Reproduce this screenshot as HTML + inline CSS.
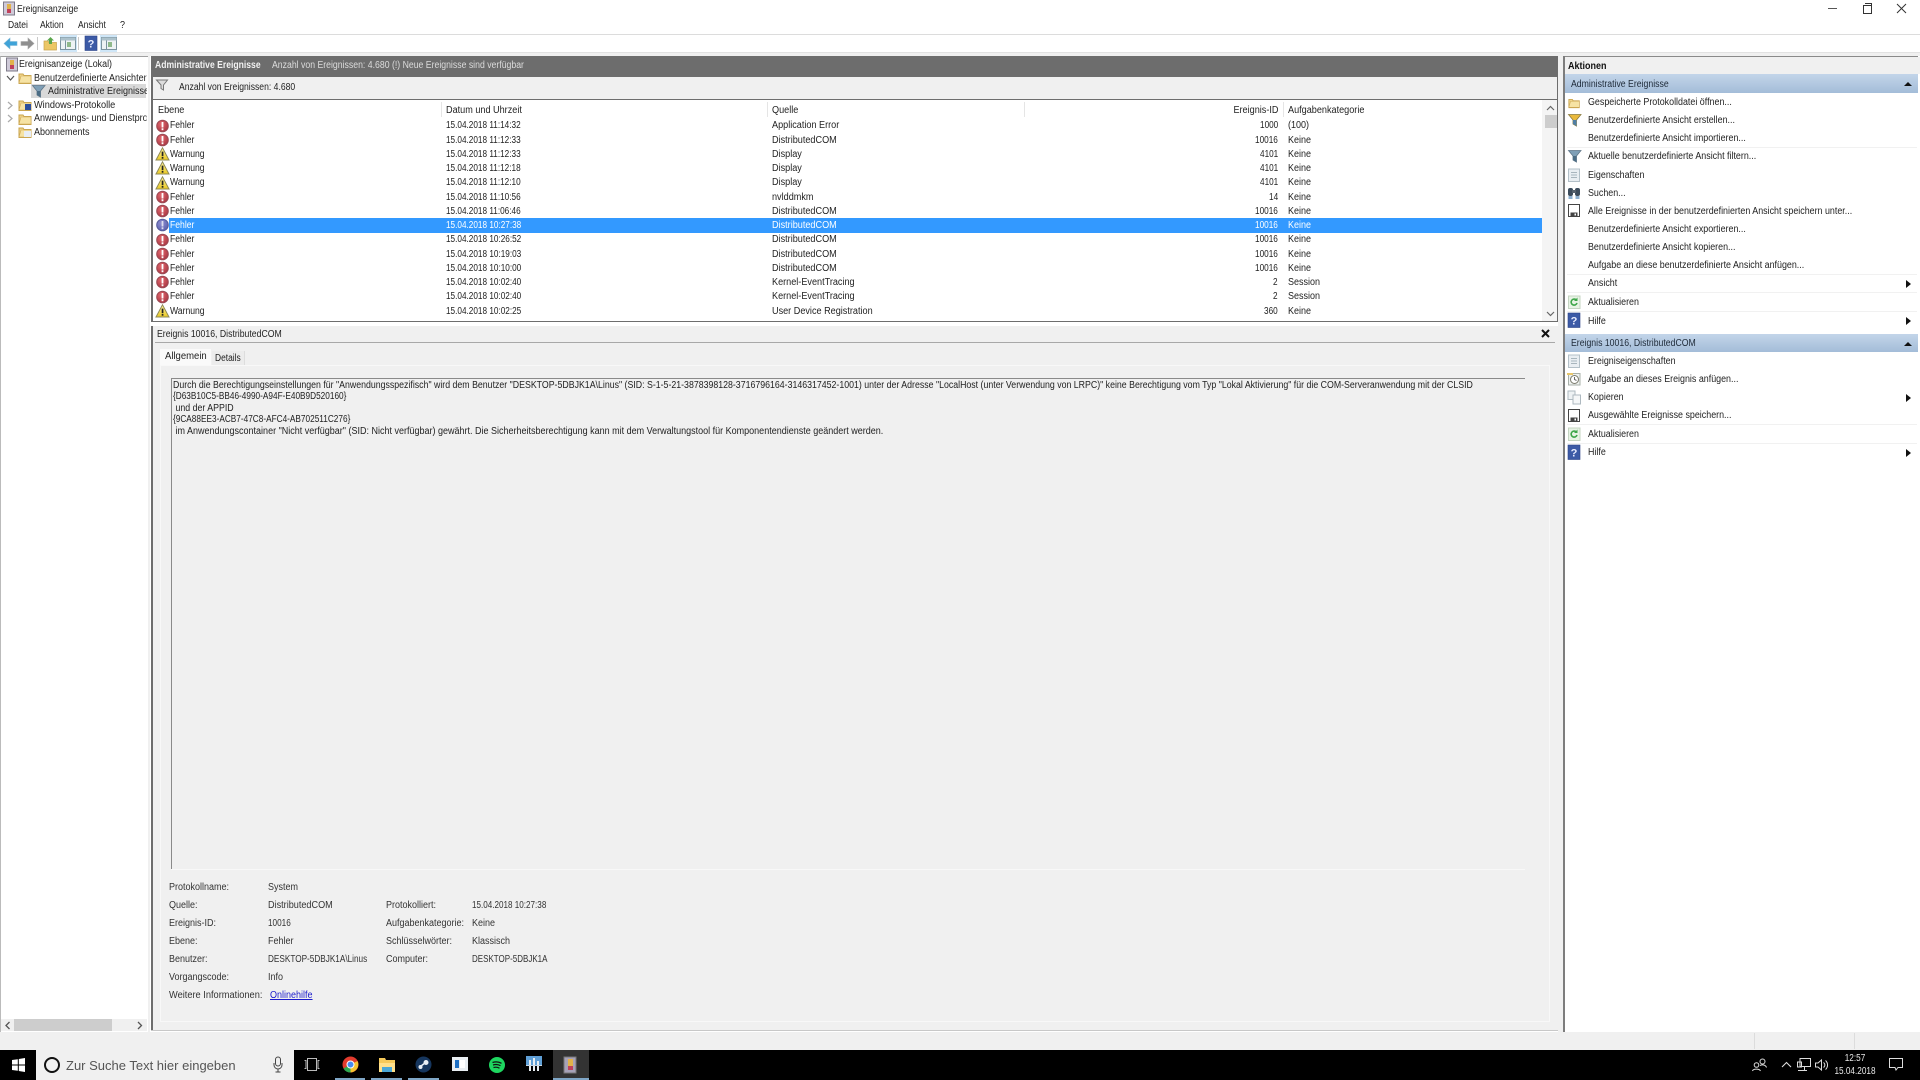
<!DOCTYPE html>
<html lang="de"><head><meta charset="utf-8"><title>Ereignisanzeige</title>
<style>
html,body{margin:0;padding:0;width:1920px;height:1080px;overflow:hidden;background:#fff}
#w{position:absolute;left:0;top:0;width:1920px;height:1080px;overflow:hidden;background:#fff;font:10px/14px "Liberation Sans",sans-serif;color:#222;filter:blur(.3px)}
.t,.d,.a,.r span,.h span{transform:scaleX(var(--s,.9));transform-origin:0 50%}
.t{position:absolute;white-space:nowrap;height:14px;line-height:14px;margin-top:.7px}
.b{position:absolute}
svg{position:absolute;overflow:visible}
.r{position:relative;height:14.25px;white-space:nowrap}
.r span{position:absolute;top:.7px;line-height:14px}
.r svg{left:2px;top:0}
.c1{left:17px;--s:.86}.c2{left:293px;--s:.82}.c3{left:619px;--s:.91}.r span.c4{right:264px;text-align:right;--s:.82;transform-origin:100% 50%}.c5{left:1135px}
.sel{background:linear-gradient(#3399ff,#3399ff) no-repeat 16px 0/1373px 100%;color:#fff}
.h{position:absolute;left:1565px;width:353px;height:19px;background:linear-gradient(#c3d5e9,#a3bcd8);line-height:19px;color:#1e2a38;text-indent:0}
.h span{position:absolute;left:5.500px;top:.8px;--s:.87;white-space:nowrap}
.h i{position:absolute;right:6px;top:8px;width:0;height:0;border:4px solid transparent;border-top:0;border-bottom:4px solid #111}
.a{position:absolute;left:1588px;line-height:14px;white-space:nowrap;--s:.89;margin-top:.7px}
.m{position:absolute;left:1906px;width:0;height:0;border:4px solid transparent;border-left:5px solid #111;border-right:0}
.l{position:absolute;left:1567px;width:350px;height:1px;background:#f1f1f1}
.d{position:absolute;white-space:nowrap;line-height:14px;color:#333;margin-top:.7px}
</style></head><body><div id="w">
<svg width="0" height="0" style="position:absolute">
<defs>
<radialGradient id="rg" cx=".4" cy=".35" r=".7"><stop offset="0" stop-color="#e26a70"/><stop offset="1" stop-color="#a83440"/></radialGradient>
<radialGradient id="bg" cx=".4" cy=".35" r=".7"><stop offset="0" stop-color="#8f8fd0"/><stop offset="1" stop-color="#5a60ad"/></radialGradient>
<linearGradient id="yg" x1="0" y1="0" x2="0" y2="1"><stop offset="0" stop-color="#fff3a0"/><stop offset="1" stop-color="#e9c821"/></linearGradient>
<g id="err"><circle cx="7.500" cy="7" r="5.800" fill="url(#rg)" stroke="#9a4a54" stroke-width="1"/><rect x="6.600" y="3" width="1.800" height="5.500" fill="#fff"/><rect x="6.600" y="9.300" width="1.800" height="1.900" fill="#fff"/></g>
<g id="errs"><circle cx="7.500" cy="7" r="5.800" fill="url(#bg)" stroke="#565c9a" stroke-width="1"/><rect x="6.600" y="3" width="1.800" height="5.500" fill="#dde"/><rect x="6.600" y="9.300" width="1.800" height="1.900" fill="#dde"/></g>
<g id="war"><path d="M7.500.8 14 13H1z" fill="url(#yg)" stroke="#8f8a55" stroke-width="1"/><rect x="6.700" y="4.600" width="1.700" height="4.600" fill="#222"/><rect x="6.700" y="10" width="1.700" height="1.700" fill="#222"/></g>
<g id="fold"><path d="M1 4h4l1 1.500h7v8H1z" fill="#f0d58a" stroke="#c9a44e"/><path d="M3 6h10v7H1z" fill="#f6e3a4" stroke="#cfa955" stroke-width=".6"/></g>
<g id="fy"><path d="M.5 1.500h12.500L8.500 7v6l-3.500-2V7z" fill="#e9b93c" stroke="#8a7a3c" stroke-width=".8"/><path d="M5 7h3.500v6l-3.500-2z" fill="#4f7fa5"/></g>
<g id="fb"><path d="M.5 1.500h12.500L8.500 7v6l-3.500-2V7z" fill="#7f9fb6" stroke="#5f7688" stroke-width=".8"/><path d="M5 7h3.500v6l-3.500-2z" fill="#4b6c84"/></g>
<g id="prop"><rect x="1.500" y="1" width="11" height="12.500" fill="#e9eef2" stroke="#b3c0c8"/><path d="M4 4.500h6M4 7h6M4 9.500h6" stroke="#a8b5bd"/></g>
<g id="bin"><rect x="1" y="2" width="5" height="8" rx="2" fill="#3c4c5c"/><rect x="8" y="2" width="5" height="8" rx="2" fill="#3c4c5c"/><rect x="5" y="4" width="4" height="3" fill="#56626e"/><rect x="1.500" y="10" width="4" height="3" fill="#8db0d0"/><rect x="8.500" y="10" width="4" height="3" fill="#8db0d0"/></g>
<g id="sav"><path d="M1.500 1.500h11v12h-11z" fill="#fff" stroke="#444" stroke-width="1"/><rect x="3.500" y="9.500" width="7" height="4" fill="#444"/><rect x="7.500" y="10.500" width="1.500" height="2" fill="#fff"/></g>
<g id="ref"><rect x="1.500" y="1" width="11.500" height="12.500" fill="#e7f3e4" stroke="#c4d4c2"/><path d="M10 8a3 3 0 1 1-.7-3" fill="none" stroke="#3fa64a" stroke-width="1.600"/><path d="M10.500 2.500v3.500h-3.500z" fill="#3fa64a"/></g>
<g id="hlp"><rect x="1" y="0" width="12" height="14.500" fill="#3c5aa6" stroke="#2c4488" stroke-width=".6"/><text x="7" y="11.500" font-family="Liberation Sans" font-size="11" font-weight="bold" fill="#e8ecff" text-anchor="middle">?</text></g>
<g id="tsk"><rect x="1.500" y="1.500" width="11.500" height="11.500" fill="#eef1ef" stroke="#a8b0aa"/><circle cx="7.500" cy="7.500" r="4" fill="#fff" stroke="#7a7a6c"/><path d="M7.500 5v2.500l2 1" stroke="#666" fill="none"/><path d="M0 1h6v2H0z" fill="#e8c66a"/></g>
<g id="cop"><rect x="1" y="1" width="7" height="8.500" fill="#eef2f4" stroke="#aeb9c0"/><rect x="6" y="5" width="7.500" height="9" fill="#f5f7f8" stroke="#aeb9c0"/></g>
<g id="pan"><rect x=".5" y="1.500" width="15" height="12" fill="#eef3f5" stroke="#7c94a0"/><rect x=".5" y="1.500" width="15" height="3" fill="#adc2cc"/><rect x="7" y="6" width="4" height="5" fill="#8fb98b"/><path d="M5.500 4.500v9" stroke="#7c94a0"/></g>
<g id="ev"><rect x="1.500" y="1" width="11" height="13" fill="#cfcad8" stroke="#7d7a88"/><rect x="5" y="3" width="4" height="9" fill="#e2b24a"/><rect x="5" y="8" width="4" height="4" fill="#c0405c"/></g>
</defs></svg>

<!-- title bar -->
<svg style="left:2px;top:1px" width="15" height="15"><use href="#ev"/></svg>
<div class="t" style="left:17px;top:2px;--s:.86">Ereignisanzeige</div>
<div class="b" style="left:1828px;top:8px;width:9px;height:1px;background:#555"></div>
<div class="b" style="left:1863px;top:5px;width:7px;height:7px;border:1px solid #333;background:#fff"></div>
<div class="b" style="left:1865px;top:3px;width:6px;height:6px;border-top:1px solid #333;border-right:1px solid #333"></div>
<svg style="left:1896px;top:3px" width="11" height="11"><path d="M1 1l9 9M10 1l-9 9" stroke="#333" fill="none"/></svg>
<!-- menu -->
<div class="t" style="left:8px;top:18px;--s:.85">Datei</div>
<div class="t" style="left:40px;top:18px;--s:.85">Aktion</div>
<div class="t" style="left:78px;top:18px;--s:.85">Ansicht</div>
<div class="t" style="left:120px;top:18px">?</div>
<div class="b" style="left:0;top:34px;width:1920px;height:1px;background:#dcdcdc"></div>
<!-- toolbar -->
<svg style="left:3px;top:36px" width="15" height="15"><path d="M1 7.500 7 2v3.500h7v4H7V13z" fill="#3fa3d8" stroke="#7ab5d5" stroke-width=".6"/></svg>
<svg style="left:20px;top:36px" width="15" height="15"><path d="M14 7.500 8 2v3.500H1v4h7V13z" fill="#8f8f8f" stroke="#a5a5a5" stroke-width=".6"/></svg>
<div class="b" style="left:37px;top:37px;width:1px;height:13px;background:#c9c9c9"></div>
<svg style="left:43px;top:36px" width="15" height="16"><path d="M1 5h4l1 1.500h7.500V14H1z" fill="#ecc766" stroke="#c9a44e" stroke-width=".7"/><path d="M7.500 1 4 4.500h2V8h3V4.500h2z" fill="#5aa64b"/></svg>
<div class="b" style="left:60px;top:35px;width:17px;height:17px;background:#cfe6f7"></div>
<svg style="left:60px;top:36px" width="16" height="15"><use href="#pan"/></svg>
<div class="b" style="left:78px;top:37px;width:1px;height:13px;background:#c9c9c9"></div>
<svg style="left:84px;top:36px" width="14" height="15"><use href="#hlp"/></svg>
<div class="b" style="left:100px;top:35px;width:17px;height:17px;background:#cfe6f7"></div>
<svg style="left:101px;top:36px" width="16" height="15"><use href="#pan"/></svg>
<div class="b" style="left:0;top:52px;width:1920px;height:1px;background:#e2e2e2"></div>
<div class="b" style="left:0;top:53px;width:1920px;height:3px;background:#f0f0f0"></div>

<!-- tree -->
<div class="b" style="left:0;top:56px;width:147px;height:975px;background:#fff;border:1px solid #a0a0a0;border-left-color:#bbb"></div>
<svg style="left:5px;top:57px" width="15" height="15"><use href="#ev"/></svg>
<div class="t" style="left:19px;top:57px;--s:.89">Ereignisanzeige (Lokal)</div>
<svg style="left:6px;top:75px" width="9" height="7"><path d="M1 1l3.500 4L8 1" fill="none" stroke="#555" stroke-width="1.200"/></svg>
<svg style="left:18px;top:70px" width="15" height="15"><use href="#fold"/></svg>
<div class="t" style="left:34px;top:71px;width:125px;overflow:hidden;--s:.9">Benutzerdefinierte Ansichten</div>
<div class="b" style="left:31px;top:84px;width:115px;height:14px;background:#d9d9d9"></div>
<svg style="left:32px;top:84px" width="14" height="14"><use href="#fb"/></svg>
<div class="t" style="left:48px;top:84px;width:110px;overflow:hidden;--s:.9">Administrative Ereignisse</div>
<svg style="left:7px;top:101px" width="7" height="9"><path d="M1 1l4 3.500L1 8" fill="none" stroke="#aaa" stroke-width="1.200"/></svg>
<svg style="left:18px;top:97px" width="15" height="15"><use href="#fold"/><rect x="7" y="7" width="6" height="6" fill="#2c4f9c"/></svg>
<div class="t" style="left:34px;top:98px;--s:.92">Windows-Protokolle</div>
<svg style="left:7px;top:114px" width="7" height="9"><path d="M1 1l4 3.500L1 8" fill="none" stroke="#aaa" stroke-width="1.200"/></svg>
<svg style="left:18px;top:111px" width="15" height="15"><use href="#fold"/></svg>
<div class="t" style="left:34px;top:111.500px;width:125px;overflow:hidden;--s:.9">Anwendungs- und Dienstprotokolle</div>
<svg style="left:18px;top:124px" width="15" height="15"><use href="#fold"/><rect x="6" y="7" width="7" height="6" fill="#e8eef5"/></svg>
<div class="t" style="left:34px;top:125px">Abonnements</div>
<!-- tree scrollbar -->
<div class="b" style="left:1px;top:1019px;width:146px;height:12px;background:#f0f0f0"></div>
<div class="b" style="left:14px;top:1019px;width:98px;height:12px;background:#cdcdcd"></div>
<svg style="left:5px;top:1021px" width="6" height="9"><path d="M4.500 1 1 4.500 4.500 8" fill="none" stroke="#555" stroke-width="1.300"/></svg>
<svg style="left:137px;top:1021px" width="6" height="9"><path d="M1 1l3.500 3.500L1 8" fill="none" stroke="#555" stroke-width="1.300"/></svg>

<!-- splitter -->
<div class="b" style="left:148px;top:53px;width:2px;height:980px;background:#f0f0f0"></div>

<!-- center top -->
<div class="b" style="left:151px;top:56px;width:1407px;height:266px;background:#6d6d6d"></div>
<div class="t" style="left:155px;top:58px;color:#f2f2f2;font-weight:bold;--s:.86">Administrative Ereignisse</div>
<div class="t" style="left:272px;top:58px;color:#dcdcdc;--s:.87">Anzahl von Ereignissen: 4.680 (!) Neue Ereignisse sind verfügbar</div>
<div class="b" style="left:153px;top:77px;width:1404px;height:22px;background:#f0f0f0"></div>
<svg style="left:156px;top:79px" width="13" height="13"><path d="M.5 1h11L7.500 6v5L5 9.500V6z" fill="#ddd" stroke="#777"/></svg>
<div class="t" style="left:179px;top:80px;--s:.86">Anzahl von Ereignissen: 4.680</div>
<div class="b" style="left:153px;top:100px;width:1404px;height:221px;background:#fff;overflow:hidden">
 <div style="position:absolute;left:0;top:2.300px;width:1389px;height:15px">
  <div class="t" style="left:5px;top:1px;--s:.91">Ebene</div>
  <div class="t" style="left:293px;top:1px;--s:.91">Datum und Uhrzeit</div>
  <div class="t" style="left:619px;top:1px;--s:.91">Quelle</div>
  <div class="t" style="right:264px;top:1px;--s:.91;transform-origin:100% 50%">Ereignis-ID</div>
  <div class="t" style="left:1135px;top:1px;--s:.91">Aufgabenkategorie</div>
  <i style="position:absolute;left:288px;top:0;width:1px;height:15px;background:#e5e5e5"></i>
  <i style="position:absolute;left:614px;top:0;width:1px;height:15px;background:#e5e5e5"></i>
  <i style="position:absolute;left:871px;top:0;width:1px;height:15px;background:#e5e5e5"></i>
  <i style="position:absolute;left:1130px;top:0;width:1px;height:15px;background:#e5e5e5"></i>
 </div>
 <div style="position:absolute;left:0;top:18.700px;width:1389px">
  <div class="r"><svg width="15" height="14"><use href="#err"/></svg><span class="c1">Fehler</span><span class="c2">15.04.2018 11:14:32</span><span class="c3">Application Error</span><span class="c4">1000</span><span class="c5">(100)</span></div>
  <div class="r"><svg width="15" height="14"><use href="#err"/></svg><span class="c1">Fehler</span><span class="c2">15.04.2018 11:12:33</span><span class="c3">DistributedCOM</span><span class="c4">10016</span><span class="c5">Keine</span></div>
  <div class="r"><svg width="15" height="14"><use href="#war"/></svg><span class="c1">Warnung</span><span class="c2">15.04.2018 11:12:33</span><span class="c3">Display</span><span class="c4">4101</span><span class="c5">Keine</span></div>
  <div class="r"><svg width="15" height="14"><use href="#war"/></svg><span class="c1">Warnung</span><span class="c2">15.04.2018 11:12:18</span><span class="c3">Display</span><span class="c4">4101</span><span class="c5">Keine</span></div>
  <div class="r"><svg width="15" height="14"><use href="#war"/></svg><span class="c1">Warnung</span><span class="c2">15.04.2018 11:12:10</span><span class="c3">Display</span><span class="c4">4101</span><span class="c5">Keine</span></div>
  <div class="r"><svg width="15" height="14"><use href="#err"/></svg><span class="c1">Fehler</span><span class="c2">15.04.2018 11:10:56</span><span class="c3">nvlddmkm</span><span class="c4">14</span><span class="c5">Keine</span></div>
  <div class="r"><svg width="15" height="14"><use href="#err"/></svg><span class="c1">Fehler</span><span class="c2">15.04.2018 11:06:46</span><span class="c3">DistributedCOM</span><span class="c4">10016</span><span class="c5">Keine</span></div>
  <div class="r sel"><svg width="15" height="14"><use href="#errs"/></svg><span class="c1">Fehler</span><span class="c2">15.04.2018 10:27:38</span><span class="c3">DistributedCOM</span><span class="c4">10016</span><span class="c5">Keine</span></div>
  <div class="r"><svg width="15" height="14"><use href="#err"/></svg><span class="c1">Fehler</span><span class="c2">15.04.2018 10:26:52</span><span class="c3">DistributedCOM</span><span class="c4">10016</span><span class="c5">Keine</span></div>
  <div class="r"><svg width="15" height="14"><use href="#err"/></svg><span class="c1">Fehler</span><span class="c2">15.04.2018 10:19:03</span><span class="c3">DistributedCOM</span><span class="c4">10016</span><span class="c5">Keine</span></div>
  <div class="r"><svg width="15" height="14"><use href="#err"/></svg><span class="c1">Fehler</span><span class="c2">15.04.2018 10:10:00</span><span class="c3">DistributedCOM</span><span class="c4">10016</span><span class="c5">Keine</span></div>
  <div class="r"><svg width="15" height="14"><use href="#err"/></svg><span class="c1">Fehler</span><span class="c2">15.04.2018 10:02:40</span><span class="c3">Kernel-EventTracing</span><span class="c4">2</span><span class="c5">Session</span></div>
  <div class="r"><svg width="15" height="14"><use href="#err"/></svg><span class="c1">Fehler</span><span class="c2">15.04.2018 10:02:40</span><span class="c3">Kernel-EventTracing</span><span class="c4">2</span><span class="c5">Session</span></div>
  <div class="r"><svg width="15" height="14"><use href="#war"/></svg><span class="c1">Warnung</span><span class="c2">15.04.2018 10:02:25</span><span class="c3">User Device Registration</span><span class="c4">360</span><span class="c5">Keine</span></div>
 </div>
 <!-- vertical scrollbar -->
 <div style="position:absolute;left:1389px;top:0;width:15px;height:221px;background:#f4f4f4"></div>
 <div style="position:absolute;left:1392px;top:15px;width:12px;height:13px;background:#cdcdcd"></div>
 <svg style="left:1393px;top:5px" width="9" height="6"><path d="M1 5l3.500-3.500L8 5" fill="none" stroke="#666" stroke-width="1.200"/></svg>
 <svg style="left:1393px;top:211px" width="9" height="6"><path d="M1 1l3.500 3.500L8 1" fill="none" stroke="#666" stroke-width="1.200"/></svg>
</div>

<!-- detail pane -->
<div class="b" style="left:151px;top:326px;width:1408px;height:704px;background:#f0f0f0;border-left:2px solid #6d6d6d;box-sizing:border-box"></div>
<div class="t" style="left:157px;top:327.500px;--s:.87">Ereignis 10016, DistributedCOM</div>
<svg style="left:1541px;top:329px" width="9" height="9"><path d="M1 1l7 7M8 1l-7 7" stroke="#111" stroke-width="2" fill="none"/></svg>
<div class="b" style="left:155px;top:342px;width:1400px;height:1px;background:#a8a8a8"></div>
<div class="b" style="left:160px;top:349px;width:51px;height:17px;background:#fafafa"></div>
<div class="t" style="left:165px;top:349px;--s:.95">Allgemein</div>
<div class="b" style="left:212px;top:351px;width:32px;height:15px;background:#ececec;border-right:1px solid #ddd"></div>
<div class="t" style="left:215px;top:351px;--s:.84">Details</div>
<div class="b" style="left:160px;top:365px;width:1390px;height:657px;border:1px solid #f8f8f8;box-sizing:border-box"></div>
<div class="b" style="left:171px;top:378px;width:1354px;height:1px;background:#8a8a8a"></div>
<div class="b" style="left:171px;top:378px;width:1px;height:491px;background:#8a8a8a"></div>
<div class="b" style="left:171px;top:869px;width:1354px;height:1px;background:#f8f8f8"></div>
<div class="t" style="left:172.500px;top:378.500px;--s:.878">Durch die Berechtigungseinstellungen für "Anwendungsspezifisch" wird dem Benutzer "DESKTOP-5DBJK1A\Linus" (SID: S-1-5-21-3878398128-3716796164-3146317452-1001) unter der Adresse "LocalHost (unter Verwendung von LRPC)" keine Berechtigung vom Typ "Lokal Aktivierung" für die COM-Serveranwendung mit der CLSID</div>
<div class="t" style="left:172.500px;top:389.500px;--s:.825">{D63B10C5-BB46-4990-A94F-E40B9D520160}</div>
<div class="t" style="left:172.500px;top:401px;--s:.88">&nbsp;und der APPID</div>
<div class="t" style="left:172.500px;top:412.500px;--s:.825">{9CA88EE3-ACB7-47C8-AFC4-AB702511C276}</div>
<div class="t" style="left:172.500px;top:424px;--s:.9">&nbsp;im Anwendungscontainer "Nicht verfügbar" (SID: Nicht verfügbar) gewährt. Die Sicherheitsberechtigung kann mit dem Verwaltungstool für Komponentendienste geändert werden.</div>

<div class="d" style="left:169px;top:880px">Protokollname:</div><div class="d" style="left:268px;top:880px">System</div>
<div class="d" style="left:169px;top:898px">Quelle:</div><div class="d" style="left:268px;top:898px;--s:.91">DistributedCOM</div><div class="d" style="left:386px;top:898px">Protokolliert:</div><div class="d" style="left:472px;top:898px;--s:.81">15.04.2018 10:27:38</div>
<div class="d" style="left:169px;top:916px">Ereignis-ID:</div><div class="d" style="left:268px;top:916px;--s:.82">10016</div><div class="d" style="left:386px;top:916px">Aufgabenkategorie:</div><div class="d" style="left:472px;top:916px">Keine</div>
<div class="d" style="left:169px;top:934px">Ebene:</div><div class="d" style="left:268px;top:934px">Fehler</div><div class="d" style="left:386px;top:934px">Schlüsselwörter:</div><div class="d" style="left:472px;top:934px">Klassisch</div>
<div class="d" style="left:169px;top:952px">Benutzer:</div><div class="d" style="left:268px;top:952px;--s:.82">DESKTOP-5DBJK1A\Linus</div><div class="d" style="left:386px;top:952px">Computer:</div><div class="d" style="left:472px;top:952px;--s:.8">DESKTOP-5DBJK1A</div>
<div class="d" style="left:169px;top:970px">Vorgangscode:</div><div class="d" style="left:268px;top:970px">Info</div>
<div class="d" style="left:169px;top:988px;--s:.925">Weitere Informationen:</div><div class="d" style="left:270px;top:988px;color:#1a1acc;text-decoration:underline">Onlinehilfe</div>

<!-- gray bottom lines -->
<div class="b" style="left:151px;top:1030px;width:1412px;height:1px;background:#c8c8c8"></div>
<div class="b" style="left:0;top:1032px;width:1920px;height:18px;background:#f0f0f0"></div>
<div class="b" style="left:1754px;top:1033px;width:1px;height:16px;background:#dcdcdc"></div>
<div class="b" style="left:1854px;top:1033px;width:1px;height:16px;background:#dcdcdc"></div>

<!-- right panel -->
<div class="b" style="left:1558px;top:53px;width:5px;height:979px;background:#f0f0f0"></div>
<div class="b" style="left:1563px;top:56px;width:2px;height:976px;background:#7d7d7d"></div>
<div class="b" style="left:1565px;top:56px;width:353px;height:1px;background:#8a8a8a"></div>
<div class="b" style="left:1565px;top:57px;width:355px;height:17px;background:#f0f0f0"></div>
<div class="t" style="left:1568px;top:59px;font-weight:bold;color:#111">Aktionen</div>
<div class="h" style="top:74px"><span>Administrative Ereignisse</span><i></i></div>
<svg style="left:1568px;top:96px" width="13" height="13" viewBox="0 0 15 15"><use href="#fold"/></svg><div class="a" style="top:95px">Gespeicherte Protokolldatei öffnen...</div>
<svg style="left:1568px;top:113px" width="14" height="15"><use href="#fy"/></svg><div class="a" style="top:113px">Benutzerdefinierte Ansicht erstellen...</div>
<div class="a" style="top:131px">Benutzerdefinierte Ansicht importieren...</div>
<div class="l" style="top:147px"></div>
<svg style="left:1568px;top:149px" width="14" height="15"><use href="#fb"/></svg><div class="a" style="top:149.500px">Aktuelle benutzerdefinierte Ansicht filtern...</div>
<svg style="left:1567px;top:168px" width="15" height="15"><use href="#prop"/></svg><div class="a" style="top:168px">Eigenschaften</div>
<svg style="left:1567px;top:186px" width="15" height="15"><use href="#bin"/></svg><div class="a" style="top:186px">Suchen...</div>
<svg style="left:1567px;top:203px" width="15" height="15"><use href="#sav"/></svg><div class="a" style="top:204px">Alle Ereignisse in der benutzerdefinierten Ansicht speichern unter...</div>
<div class="a" style="top:222px">Benutzerdefinierte Ansicht exportieren...</div>
<div class="a" style="top:240px">Benutzerdefinierte Ansicht kopieren...</div>
<div class="a" style="top:258px">Aufgabe an diese benutzerdefinierte Ansicht anfügen...</div>
<div class="l" style="top:274px"></div>
<div class="a" style="top:276.500px">Ansicht</div><i class="m" style="top:280px"></i>
<div class="l" style="top:292px"></div>
<svg style="left:1567px;top:295px" width="15" height="15"><use href="#ref"/></svg><div class="a" style="top:295px">Aktualisieren</div>
<div class="l" style="top:311px"></div>
<svg style="left:1567px;top:313px" width="14" height="15"><use href="#hlp"/></svg><div class="a" style="top:314px">Hilfe</div><i class="m" style="top:317px"></i>
<div class="h" style="top:334px;height:18px;line-height:18px"><span>Ereignis 10016, DistributedCOM</span><i></i></div>
<svg style="left:1567px;top:354px" width="15" height="15"><use href="#prop"/></svg><div class="a" style="top:354.500px">Ereigniseigenschaften</div>
<svg style="left:1567px;top:372px" width="15" height="15"><use href="#tsk"/></svg><div class="a" style="top:372.500px">Aufgabe an dieses Ereignis anfügen...</div>
<svg style="left:1567px;top:390px" width="15" height="15"><use href="#cop"/></svg><div class="a" style="top:390.500px">Kopieren</div><i class="m" style="top:394px"></i>
<svg style="left:1567px;top:408px" width="15" height="15"><use href="#sav"/></svg><div class="a" style="top:408.500px">Ausgewählte Ereignisse speichern...</div>
<div class="l" style="top:424px"></div>
<svg style="left:1567px;top:427px" width="15" height="15"><use href="#ref"/></svg><div class="a" style="top:427px">Aktualisieren</div>
<div class="l" style="top:443px"></div>
<svg style="left:1567px;top:445px" width="14" height="15"><use href="#hlp"/></svg><div class="a" style="top:445.500px">Hilfe</div><i class="m" style="top:449px"></i>

<!-- taskbar -->
<div class="b" style="left:0;top:1050px;width:1920px;height:30px;background:#000"></div>
<svg style="left:12px;top:1058px" width="14" height="14"><path d="M0 2l5.800-.8v5.300H0zM6.800 1 13 0v6.500H6.800zM0 7.500h5.800v5.300L0 12zM6.800 7.500H13V14l-6.200-1z" fill="#fff"/></svg>
<div class="b" style="left:36px;top:1050px;width:258px;height:30px;background:#f0f0f0"></div>
<div class="b" style="left:44px;top:1057px;width:12px;height:12px;border:2.500px solid #111;border-radius:50%"></div>
<div class="t" style="left:66px;top:1057.500px;font-size:13px;color:#555;height:16px;line-height:16px;--s:1">Zur Suche Text hier eingeben</div>
<svg style="left:273px;top:1057px" width="10" height="16"><rect x="2.500" y="0" width="5" height="9" rx="2.500" fill="none" stroke="#444"/><path d="M1 6v2a4 4 0 0 0 8 0V6M5 12v3M2.500 15h5" fill="none" stroke="#444"/></svg>
<svg style="left:304px;top:1058px" width="16" height="13"><rect x="3.500" y=".5" width="9" height="12" fill="none" stroke="#bbb"/><path d="M.5 2.500h1.500v8H.5M15.500 2.500H14v8h1.500" fill="none" stroke="#bbb"/></svg>
<svg style="left:342px;top:1056px" width="17" height="17"><circle cx="8.500" cy="8.500" r="8" fill="#e33b2e"/><path d="M8.500 8.500 1.500 12.500a8 8 0 0 0 7 4z" fill="#2da94f"/><path d="M8.500 8.500 15.500 5a8 8 0 0 1-7 11.500z" fill="#f7c331"/><circle cx="8.500" cy="8.500" r="3.500" fill="#4a8bf0" stroke="#fff"/></svg>
<svg style="left:379px;top:1056px" width="16" height="17"><path d="M0 2h6l1 2h9v12H0z" fill="#f5c95a"/><rect x="0" y="7" width="16" height="9" fill="#ffe08a"/><rect x="3" y="11" width="10" height="5" fill="#4aa8d8"/></svg>
<svg style="left:415px;top:1056px" width="17" height="17"><circle cx="8.500" cy="8.500" r="8" fill="#16365e"/><circle cx="11" cy="6.500" r="2.500" fill="#e8eef5"/><circle cx="5.500" cy="11" r="2" fill="#e8eef5"/><path d="M6 10l4-3" stroke="#e8eef5" stroke-width="1.500"/></svg>
<svg style="left:452px;top:1057px" width="16" height="15"><rect x="0" y="0" width="16" height="14" fill="#e9eef2"/><rect x="3" y="3" width="4" height="8" fill="#1d6fc4"/><rect x="8" y="3" width="5" height="8" fill="#fff"/></svg>
<svg style="left:489px;top:1057px" width="16" height="16"><circle cx="8" cy="8" r="8" fill="#1ed760"/><path d="M3.500 5.500c3-1 6.500-.7 9 .8M4 8c2.500-.7 5.500-.5 7.500.8M4.500 10.500c2-.5 4.500-.3 6 .7" fill="none" stroke="#111" stroke-width="1.200"/></svg>
<svg style="left:526px;top:1056px" width="16" height="17"><rect x="0" y="0" width="16" height="9" fill="#5f9fd6"/><rect x="3" y="4" width="2" height="11" fill="#e9eef2"/><rect x="7" y="2" width="2" height="13" fill="#e9eef2"/><rect x="11" y="5" width="2" height="10" fill="#e9eef2"/><rect x="0" y="9" width="16" height="1" fill="#c5d6e5"/></svg>
<div class="b" style="left:553px;top:1050px;width:36px;height:30px;background:#333"></div>
<svg style="left:563px;top:1057px" width="15" height="17"><rect x="1" y="0" width="12" height="16" fill="#a7a2b8" stroke="#777"/><rect x="5" y="2" width="5" height="11" fill="#e2b24a"/><rect x="5" y="9" width="5" height="4" fill="#c0405c"/></svg>
<div class="b" style="left:335px;top:1078px;width:30px;height:2px;background:#7fa6c6"></div>
<div class="b" style="left:371px;top:1078px;width:31px;height:2px;background:#7fa6c6"></div>
<div class="b" style="left:408px;top:1078px;width:31px;height:2px;background:#7fa6c6"></div>
<div class="b" style="left:553px;top:1078px;width:36px;height:2px;background:#7fa6c6"></div>
<!-- tray -->
<svg style="left:1752px;top:1058px" width="16" height="14"><circle cx="10.500" cy="3.500" r="2.500" fill="none" stroke="#ddd"/><circle cx="4.500" cy="7" r="2.300" fill="none" stroke="#ddd"/><path d="M.5 13c.5-2.500 7-2.500 8 0M8 7.500c2-1 5.500-1 6.500 2" fill="none" stroke="#ddd"/></svg>
<svg style="left:1781px;top:1061px" width="11" height="7"><path d="M1 6l4.500-4.500L10 6" fill="none" stroke="#ddd" stroke-width="1.100"/></svg>
<svg style="left:1797px;top:1058px" width="14" height="14"><path d="M3 .5h10.500v8H3zM7.500 8.500v3.500M1 12.500h9M.5 4h4v5h-4z" fill="#000" stroke="#ddd"/></svg>
<svg style="left:1815px;top:1058px" width="14" height="14"><path d="M.5 5h2.500L6.500 2v10L3 9H.5zM8.500 4.500a3 3 0 0 1 0 5M10.500 2.500a6 6 0 0 1 0 9" fill="none" stroke="#ddd"/></svg>
<div class="t" style="left:1825px;top:1051px;width:60px;text-align:center;color:#e8e8e8;--s:.82;transform-origin:50% 50%">12:57</div>
<div class="t" style="left:1825px;top:1064px;width:60px;text-align:center;color:#e8e8e8;--s:.82;transform-origin:50% 50%">15.04.2018</div>
<svg style="left:1889px;top:1058px" width="15" height="13"><path d="M.5.500h13v9H9l-2 2.500-1-2.500H.5z" fill="none" stroke="#ddd"/></svg>
</div></body></html>
